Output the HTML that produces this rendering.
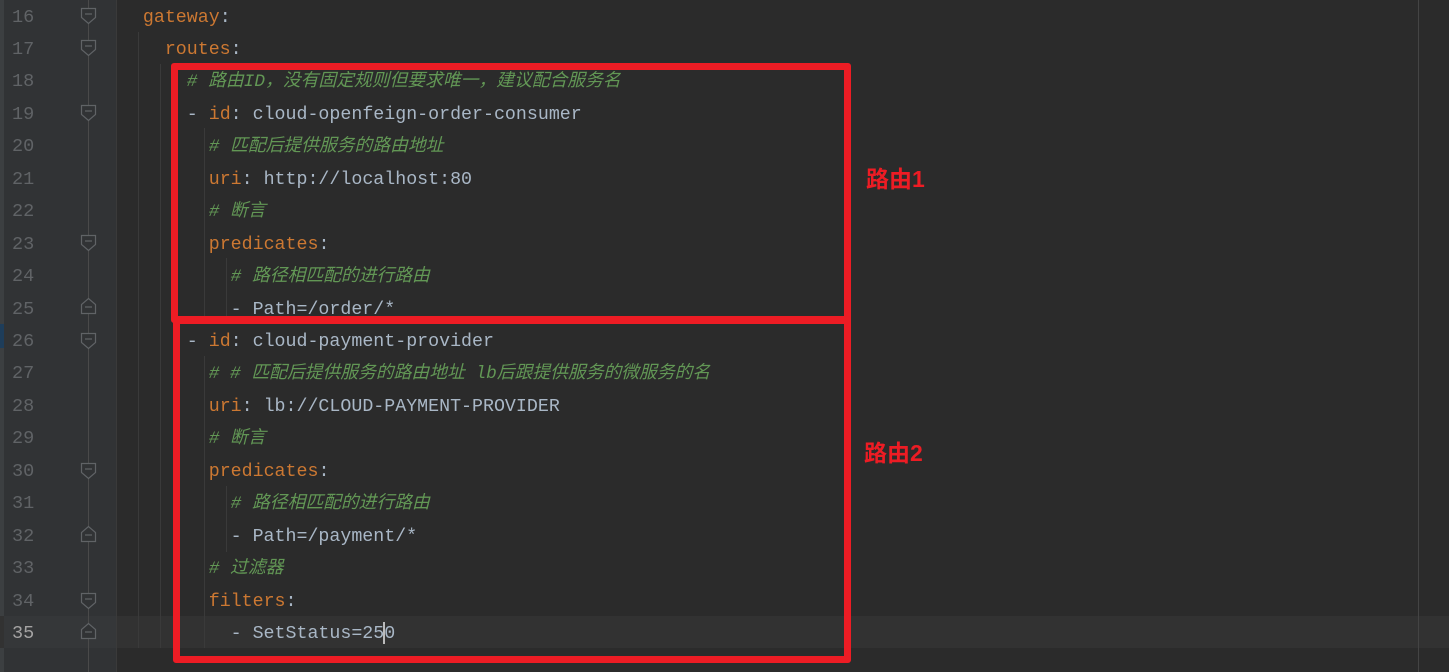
<!DOCTYPE html>
<html><head><meta charset="utf-8"><style>
html,body{margin:0;padding:0}
body{width:1449px;height:672px;background:#2b2b2b;position:relative;overflow:hidden;font-family:"Liberation Mono","Noto Sans CJK SC",monospace;font-size:18.3px}
.strip{position:absolute;left:0;top:0;width:4px;height:672px;background:#3c3f41}
.gut{position:absolute;left:4px;top:0;width:112px;height:672px;background:#313335}
.cur{position:absolute;left:0;top:616px;width:1449px;height:32px;background:#323232}
.cur2{position:absolute;left:4px;top:616px;width:112px;height:32px;background:#353739}
.ln{position:absolute;left:12px;width:40px;color:#606366;font-size:18.5px;line-height:32px;height:32px;margin-top:2px}
.code{position:absolute;left:99px;white-space:pre;color:#a9b7c6;line-height:32px;height:32px;margin-top:2px}
.k{color:#cc7832}.c{color:#629755;font-style:italic;font-size:17.8px}
.vl{position:absolute;width:1px;background:#3a3a3a}
.box{position:absolute;border:7px solid #ed1c24;border-radius:3px;box-sizing:border-box}
.lab{position:absolute;color:#ed1c24;font-family:"Liberation Sans","Noto Sans CJK SC",sans-serif;font-weight:bold;font-size:23px}
</style></head><body>
<div class="strip"></div><div class="gut"></div>
<div class="cur"></div><div class="cur2"></div>
<div style="position:absolute;left:0;top:324px;width:4px;height:24px;background:#1e3d5a"></div>
<div class="vl" style="left:88px;top:0;height:672px;background:#4a4a4a"></div>
<div class="vl" style="left:116px;top:0;height:672px"></div>
<div class="vl" style="left:138px;top:32px;height:616px"></div>
<div class="vl" style="left:160px;top:64px;height:584px"></div>
<div class="vl" style="left:204px;top:128px;height:196px"></div>
<div class="vl" style="left:226px;top:258px;height:66px"></div>
<div class="vl" style="left:204px;top:356px;height:292px"></div>
<div class="vl" style="left:226px;top:486px;height:66px"></div>
<div class="vl" style="left:1418px;top:0;height:672px;background:#444"></div>
<svg style="position:absolute;left:0;top:0" width="116" height="672">
<g fill="#313335" stroke="#606366" stroke-width="1.2">
<path d="M81.5 8.5h14v9l-7 6l-7-6z"/><path d="M81.5 40.5h14v9l-7 6l-7-6z"/>
<path d="M81.5 105.5h14v9l-7 6l-7-6z"/><path d="M81.5 235.5h14v9l-7 6l-7-6z"/>
<path d="M81.5 333.5h14v9l-7 6l-7-6z"/><path d="M81.5 463.5h14v9l-7 6l-7-6z"/>
<path d="M81.5 593.5h14v9l-7 6l-7-6z"/>
<path d="M81.5 313.5h14v-9l-7-6l-7 6z"/><path d="M81.5 541.5h14v-9l-7-6l-7 6z"/>
<path d="M81.5 638.5h14v-9l-7-6l-7 6z"/>
</g>
<g stroke="#606366" stroke-width="1.2">
<path d="M85 14h7M85 46h7M85 111h7M85 241h7M85 339h7M85 469h7M85 599h7M85 307h7M85 535h7M85 632h7"/>
</g></svg>
<div class="ln" style="top:0">16</div><div class="ln" style="top:32px">17</div><div class="ln" style="top:64px">18</div><div class="ln" style="top:97px">19</div><div class="ln" style="top:129px">20</div><div class="ln" style="top:162px">21</div><div class="ln" style="top:194px">22</div><div class="ln" style="top:227px">23</div><div class="ln" style="top:259px">24</div><div class="ln" style="top:292px">25</div><div class="ln" style="top:324px">26</div><div class="ln" style="top:356px">27</div><div class="ln" style="top:389px">28</div><div class="ln" style="top:421px">29</div><div class="ln" style="top:454px">30</div><div class="ln" style="top:486px">31</div><div class="ln" style="top:519px">32</div><div class="ln" style="top:551px">33</div><div class="ln" style="top:584px">34</div><div class="ln" style="top:616px;color:#a4a3a3">35</div>
<div class="code" style="top:0">    <span class="k">gateway</span>:</div>
<div class="code" style="top:32px">      <span class="k">routes</span>:</div>
<div class="code" style="top:64px">        <span class="c"># 路由ID，没有固定规则但要求唯一，建议配合服务名</span></div>
<div class="code" style="top:97px">        - <span class="k">id</span>: cloud-openfeign-order-consumer</div>
<div class="code" style="top:129px">          <span class="c"># 匹配后提供服务的路由地址</span></div>
<div class="code" style="top:162px">          <span class="k">uri</span>: http://localhost:80</div>
<div class="code" style="top:194px">          <span class="c"># 断言</span></div>
<div class="code" style="top:227px">          <span class="k">predicates</span>:</div>
<div class="code" style="top:259px">            <span class="c"># 路径相匹配的进行路由</span></div>
<div class="code" style="top:292px">            - Path=/order/*</div>
<div class="code" style="top:324px">        - <span class="k">id</span>: cloud-payment-provider</div>
<div class="code" style="top:356px">          <span class="c"># # 匹配后提供服务的路由地址 lb后跟提供服务的微服务的名</span></div>
<div class="code" style="top:389px">          <span class="k">uri</span>: lb://CLOUD-PAYMENT-PROVIDER</div>
<div class="code" style="top:421px">          <span class="c"># 断言</span></div>
<div class="code" style="top:454px">          <span class="k">predicates</span>:</div>
<div class="code" style="top:486px">            <span class="c"># 路径相匹配的进行路由</span></div>
<div class="code" style="top:519px">            - Path=/payment/*</div>
<div class="code" style="top:551px">          <span class="c"># 过滤器</span></div>
<div class="code" style="top:584px">          <span class="k">filters</span>:</div>
<div class="code" style="top:616px">            - SetStatus=250</div>
<div style="position:absolute;left:383px;top:622px;width:2px;height:22px;background:#bbb"></div>
<div class="box" style="left:171px;top:63px;width:680px;height:260px"></div>
<div class="box" style="left:173px;top:317px;width:678px;height:346px"></div>
<div class="lab" style="left:866px;top:160px">路由1</div>
<div class="lab" style="left:864px;top:434px">路由2</div>
</body></html>
